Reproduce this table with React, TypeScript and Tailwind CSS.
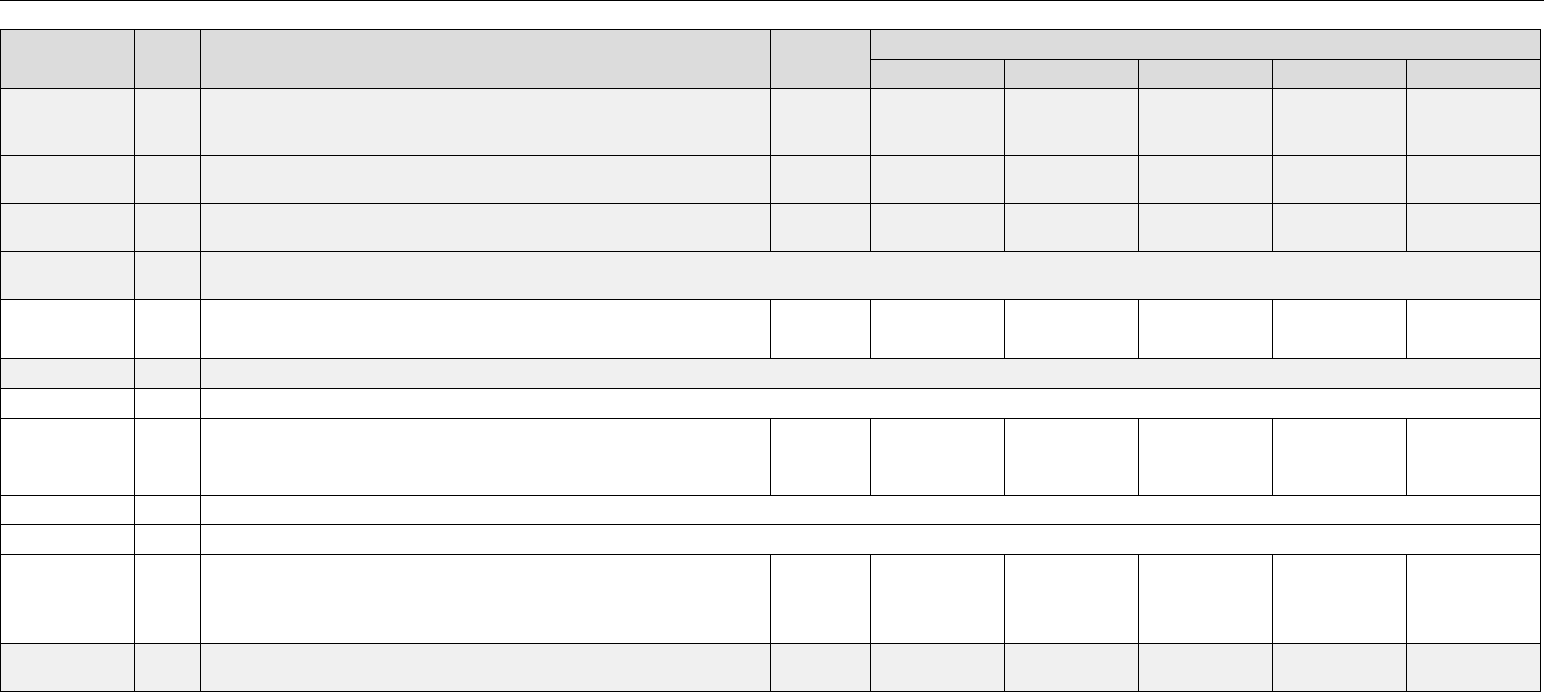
import React from "react";

const H = "bg-[#dcdcdc]";
const G = "bg-[#f0f0f0]";
const W = "bg-white";

type Row = { bg: string; span?: boolean };

const rows: Row[] = [
  { bg: G },
  { bg: G },
  { bg: G },
  { bg: G, span: true },
  { bg: W },
  { bg: G, span: true },
  { bg: W, span: true },
  { bg: W },
  { bg: W, span: true },
  { bg: W, span: true },
  { bg: W },
  { bg: G },
];

export default function App() {
  return (
    <div className="w-[1544px] h-[692px] bg-white border-t border-black font-['Liberation_Sans',sans-serif]">
      <div className="pt-[28px]">
        <div className="grid w-[1541px] bg-black p-px gap-px grid-cols-[133px_65px_569px_99px_133px_133px_133px_133px_133px] grid-rows-[29px_28px_66px_47px_47px_47px_58px_29px_29px_76px_28px_29px_88px_47px]">
          <div className={`${H} row-span-2`} />
          <div className={`${H} row-span-2`} />
          <div className={`${H} row-span-2`} />
          <div className={`${H} row-span-2`} />
          <div className={`${H} col-span-5`} />
          <div className={H} />
          <div className={H} />
          <div className={H} />
          <div className={H} />
          <div className={H} />
          {rows.map((r, i) =>
            r.span ? (
              <React.Fragment key={i}>
                <div className={r.bg} />
                <div className={r.bg} />
                <div className={`${r.bg} col-span-7`} />
              </React.Fragment>
            ) : (
              <React.Fragment key={i}>
                {Array.from({ length: 9 }).map((_, j) => (
                  <div key={j} className={r.bg} />
                ))}
              </React.Fragment>
            )
          )}
        </div>
      </div>
    </div>
  );
}
